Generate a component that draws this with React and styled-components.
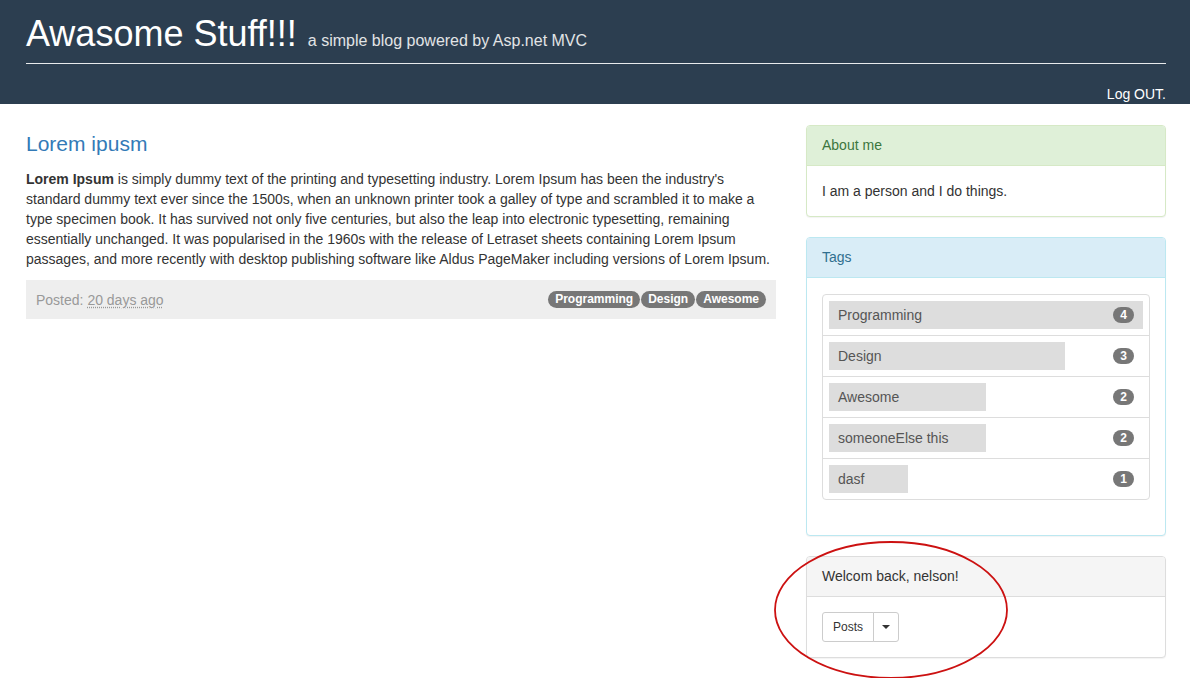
import React from "react";
import styled, { createGlobalStyle } from "styled-components";

const GlobalStyle = createGlobalStyle`
  html {
    overflow: hidden;
  }
  body {
    margin: 0;
    padding: 0;
    min-height: 100vh;
    background: #fff;
    font-family: "Liberation Sans", Arial, sans-serif;
    font-size: 14px;
    line-height: 20px;
    color: #333;
  }
`;

const Header = styled.header`
  background: #2c3e50;
  height: 104px;
  padding: 14px 24px 0 26px;
  box-sizing: border-box;
  color: #fff;
`;

const Brand = styled.h1`
  margin: 0;
  font-size: 36px;
  line-height: 40px;
  font-weight: normal;
  white-space: nowrap;
`;

const Tagline = styled.small`
  font-size: 16px;
  line-height: 1;
  color: #e2e4e6;
  margin-left: 11px;
`;

const Rule = styled.hr`
  margin: 9px 0 0;
  border: 0;
  border-top: 1px solid #e8eaec;
`;

const UserBar = styled.div`
  margin-top: 20px;
  text-align: right;
  font-size: 14px;
  line-height: 20px;
`;

const Content = styled.div`
  display: grid;
  grid-template-columns: 750px 360px;
  column-gap: 30px;
  padding: 21px 24px 0 26px;
  align-items: start;
`;

const Main = styled.main``;

const PostTitle = styled.h3`
  margin: 7px 0 13px;
  font-size: 21px;
  line-height: 24px;
  font-weight: normal;
  color: #337ab7;
`;

const PostBody = styled.p`
  margin: 0 0 11px;
`;

const PostFooter = styled.div`
  display: flex;
  align-items: center;
  justify-content: space-between;
  background: #eee;
  height: 39px;
  padding: 0 10px;
  color: #999;
`;

const Ago = styled.abbr`
  text-decoration: underline dotted;
  text-underline-offset: 2px;
  cursor: help;
`;

const LabelRow = styled.div`
  display: flex;
  gap: 1px;
`;

const Label = styled.span`
  background: #777;
  color: #fff;
  font-size: 12px;
  font-weight: bold;
  line-height: 12px;
  padding: 2px 7px 3px;
  border-radius: 9px;
`;

const Sidebar = styled.aside`
  display: flex;
  flex-direction: column;
  gap: 20px;
`;

const tones = {
  success: { bg: "#dff0d8", border: "#d6e9c6", color: "#3c763d" },
  info: { bg: "#d9edf7", border: "#bce8f1", color: "#31708f" },
  plain: { bg: "#f5f5f5", border: "#ddd", color: "#333" },
};

const Panel = styled.section`
  position: relative;
  border: 1px solid ${(p) => tones[p.$tone].border};
  border-radius: 4px;
  background: #fff;
  box-shadow: 0 1px 1px rgba(0, 0, 0, 0.05);
`;

const PanelHeading = styled.div`
  padding: 9px 15px 10px;
  background: ${(p) => tones[p.$tone].bg};
  color: ${(p) => tones[p.$tone].color};
  border-bottom: 1px solid ${(p) => tones[p.$tone].border};
  border-radius: 3px 3px 0 0;
`;

const PanelBody = styled.div`
  padding: 15px;
`;

const TagList = styled.ul`
  list-style: none;
  margin: 1px 0 20px;
  padding: 0;
`;

const TagItem = styled.li`
  position: relative;
  padding: 6px;
  border: 1px solid #ddd;
  margin-bottom: -1px;
  &:first-child {
    border-radius: 4px 4px 0 0;
  }
  &:last-child {
    margin-bottom: 0;
    border-radius: 0 0 4px 4px;
  }
`;

const TagBar = styled.div`
  background: #ddd;
  height: 28px;
  line-height: 28px;
  padding-left: 9px;
  box-sizing: border-box;
  color: #555;
  white-space: nowrap;
`;

const Count = styled.span`
  position: absolute;
  right: 15px;
  top: 50%;
  transform: translateY(-50%);
  min-width: 7px;
  padding: 2px 7px;
  border-radius: 10px;
  background: #777;
  color: #fff;
  font-size: 12px;
  font-weight: bold;
  line-height: 12px;
  text-align: center;
`;

const BtnGroup = styled.div`
  display: inline-flex;
`;

const Btn = styled.button`
  display: inline-flex;
  align-items: center;
  justify-content: center;
  height: 30px;
  padding: 0 ${(p) => (p.$caret ? "8px" : "10px")};
  font-family: inherit;
  font-size: 12px;
  color: #333;
  background: #fff;
  border: 1px solid #ccc;
  border-radius: ${(p) => (p.$caret ? "0 3px 3px 0" : "3px 0 0 3px")};
  margin-left: ${(p) => (p.$caret ? "-1px" : "0")};
  cursor: pointer;
`;

const Caret = styled.span`
  width: 0;
  height: 0;
  border-top: 4px solid #333;
  border-left: 4px solid transparent;
  border-right: 4px solid transparent;
`;

const Scribble = styled.svg`
  position: absolute;
  left: -34px;
  top: -17px;
  pointer-events: none;
  overflow: visible;
`;

const tags = [
  { name: "Programming", count: 4 },
  { name: "Design", count: 3 },
  { name: "Awesome", count: 2 },
  { name: "someoneElse this", count: 2 },
  { name: "dasf", count: 1 },
];

const max = Math.max(...tags.map((t) => t.count));

export default function App() {
  return (
    <>
      <GlobalStyle />
      <Header>
        <Brand>
          Awasome Stuff!!!<Tagline>a simple blog powered by Asp.net MVC</Tagline>
        </Brand>
        <Rule />
        <UserBar>Log OUT.</UserBar>
      </Header>

      <Content>
        <Main>
          <PostTitle>Lorem ipusm</PostTitle>
          <PostBody>
            <strong>Lorem Ipsum</strong> is simply dummy text of the printing and
            typesetting industry. Lorem Ipsum has been the industry's standard dummy
            text ever since the 1500s, when an unknown printer took a galley of type
            and scrambled it to make a type specimen book. It has survived not only
            five centuries, but also the leap into electronic typesetting, remaining
            essentially unchanged. It was popularised in the 1960s with the release
            of Letraset sheets containing Lorem Ipsum passages, and more recently with
            desktop publishing software like Aldus PageMaker including versions of
            Lorem Ipsum.
          </PostBody>
          <PostFooter>
            <span>
              Posted: <Ago title="20 days ago">20 days ago</Ago>
            </span>
            <LabelRow>
              <Label>Programming</Label>
              <Label>Design</Label>
              <Label>Awesome</Label>
            </LabelRow>
          </PostFooter>
        </Main>

        <Sidebar>
          <Panel $tone="success">
            <PanelHeading $tone="success">About me</PanelHeading>
            <PanelBody>I am a person and I do things.</PanelBody>
          </Panel>

          <Panel $tone="info">
            <PanelHeading $tone="info">Tags</PanelHeading>
            <PanelBody>
              <TagList>
                {tags.map((t) => (
                  <TagItem key={t.name}>
                    <TagBar style={{ width: `${(t.count / max) * 100}%` }}>
                      {t.name}
                    </TagBar>
                    <Count>{t.count}</Count>
                  </TagItem>
                ))}
              </TagList>
            </PanelBody>
          </Panel>

          <Panel $tone="plain">
            <PanelHeading $tone="plain">Welcom back, nelson!</PanelHeading>
            <PanelBody>
              <BtnGroup>
                <Btn>Posts</Btn>
                <Btn $caret>
                  <Caret />
                </Btn>
              </BtnGroup>
            </PanelBody>
            <Scribble width="236" height="140" viewBox="0 0 236 140">
              <ellipse
                cx="118"
                cy="70"
                rx="116"
                ry="68"
                fill="none"
                stroke="#cc1111"
                strokeWidth="1.8"
              />
            </Scribble>
          </Panel>
        </Sidebar>
      </Content>
    </>
  );
}
